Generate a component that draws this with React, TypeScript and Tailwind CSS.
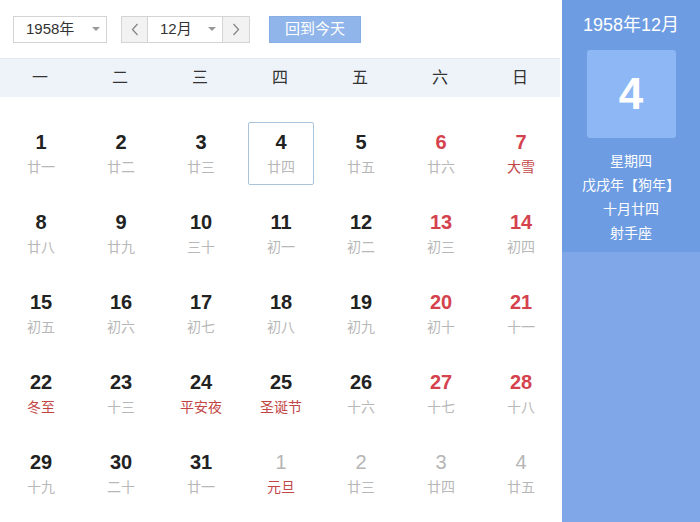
import React from "react";

type Day = { d: number; l: string; kind?: "we" | "other"; fest?: boolean };

const weeks: Day[][] = [
  [
    { d: 1, l: "廿一" },
    { d: 2, l: "廿二" },
    { d: 3, l: "廿三" },
    { d: 4, l: "廿四" },
    { d: 5, l: "廿五" },
    { d: 6, l: "廿六", kind: "we" },
    { d: 7, l: "大雪", kind: "we", fest: true },
  ],
  [
    { d: 8, l: "廿八" },
    { d: 9, l: "廿九" },
    { d: 10, l: "三十" },
    { d: 11, l: "初一" },
    { d: 12, l: "初二" },
    { d: 13, l: "初三", kind: "we" },
    { d: 14, l: "初四", kind: "we" },
  ],
  [
    { d: 15, l: "初五" },
    { d: 16, l: "初六" },
    { d: 17, l: "初七" },
    { d: 18, l: "初八" },
    { d: 19, l: "初九" },
    { d: 20, l: "初十", kind: "we" },
    { d: 21, l: "十一", kind: "we" },
  ],
  [
    { d: 22, l: "冬至", fest: true },
    { d: 23, l: "十三" },
    { d: 24, l: "平安夜", fest: true },
    { d: 25, l: "圣诞节", fest: true },
    { d: 26, l: "十六" },
    { d: 27, l: "十七", kind: "we" },
    { d: 28, l: "十八", kind: "we" },
  ],
  [
    { d: 29, l: "十九" },
    { d: 30, l: "二十" },
    { d: 31, l: "廿一" },
    { d: 1, l: "元旦", kind: "other", fest: true },
    { d: 2, l: "廿三", kind: "other" },
    { d: 3, l: "廿四", kind: "other" },
    { d: 4, l: "廿五", kind: "other" },
  ],
];

const font = { fontFamily: '"Liberation Sans", "Noto Sans CJK SC", sans-serif' };

function Caret() {
  return <span className="w-0 h-0 border-l-[4px] border-r-[4px] border-t-[4px] border-l-transparent border-r-transparent border-t-[#999]" />;
}

export default function App() {
  return (
    <div className="flex w-[700px] h-[522px] bg-white overflow-hidden" style={font}>
      <div className="w-[562px] flex flex-col">
        <div className="h-[58px] flex items-center pl-[13px] gap-[14px]">
          <div className="w-[94px] h-[27px] border border-[#d4d4d4] flex items-center justify-between pl-[12px] pr-[6px] text-[15px] text-[#333]">
            1958年
            <Caret />
          </div>
          <div className="h-[27px] w-[129px] border border-[#d4d4d4] flex text-[15px] text-[#333]">
            <div className="w-[26px] bg-[#f2f2f2] border-r border-[#d4d4d4] flex items-center justify-center">
              <svg width="8" height="13" viewBox="0 0 8 13"><path d="M6.5 1 L1.5 6.5 L6.5 12" fill="none" stroke="#888" strokeWidth="1.3" /></svg>
            </div>
            <div className="flex-1 flex items-center justify-between pl-[12px] pr-[6px]">
              12月
              <Caret />
            </div>
            <div className="w-[27px] bg-[#f2f2f2] border-l border-[#d4d4d4] flex items-center justify-center">
              <svg width="8" height="13" viewBox="0 0 8 13"><path d="M1.5 1 L6.5 6.5 L1.5 12" fill="none" stroke="#888" strokeWidth="1.3" /></svg>
            </div>
          </div>
          <div className="ml-[5px] w-[92px] h-[27px] bg-[#8fb5ea] border border-[#88aee6] text-white text-[15px] flex items-center justify-center">
            回到今天
          </div>
        </div>
        <div className="h-[39px] bg-[#eef3fa] border-t border-[#e2e8f2] grid grid-cols-7 w-[560px] text-[16px] text-[#333] items-center">
          {["一", "二", "三", "四", "五", "六", "日"].map((w) => (
            <div key={w} className="text-center">{w}</div>
          ))}
        </div>
        <div className="pt-[16px] grid grid-cols-7 w-[560px]">
          {weeks.flat().map((c, i) => {
            const sel = i === 3;
            const numCls =
              c.kind === "other"
                ? "text-[#b5b5b5] font-normal"
                : c.kind === "we"
                ? "text-[#d4424e] font-bold"
                : "text-[#222] font-bold";
            const lunCls = c.fest ? "text-[#c24646]" : "text-[#b8b8b8]";
            return (
              <div key={i} className="h-[80px] flex items-center justify-center">
                <div
                  className={
                    "w-[66px] h-[63px] ml-[2px] flex flex-col items-center justify-center rounded-[2px] " +
                    (sel ? "border border-[#a9c3dc]" : "border border-transparent")
                  }
                >
                  <div className={"text-[20px] leading-[24px] mt-[1px] " + numCls}>{c.d}</div>
                  <div className={"text-[14px] leading-[22px] mt-[2px] " + lunCls}>{c.l}</div>
                </div>
              </div>
            );
          })}
        </div>
      </div>
      <div className="flex-1 flex flex-col bg-[#80a8e8]">
        <div className="h-[252px] bg-[#6d9ce2] flex flex-col items-center text-white">
          <div className="mt-[12px] text-[18px] leading-[26px]">1958年12月</div>
          <div className="mt-[12px] w-[89px] h-[88px] bg-[#8db7f5] rounded-[3px] flex items-center justify-center text-[44px] font-bold">
            4
          </div>
          <div className="mt-[11px] text-[14px] leading-[24px] text-center">
            <div>星期四</div>
            <div>戊戌年【狗年】</div>
            <div>十月廿四</div>
            <div>射手座</div>
          </div>
        </div>
      </div>
    </div>
  );
}
